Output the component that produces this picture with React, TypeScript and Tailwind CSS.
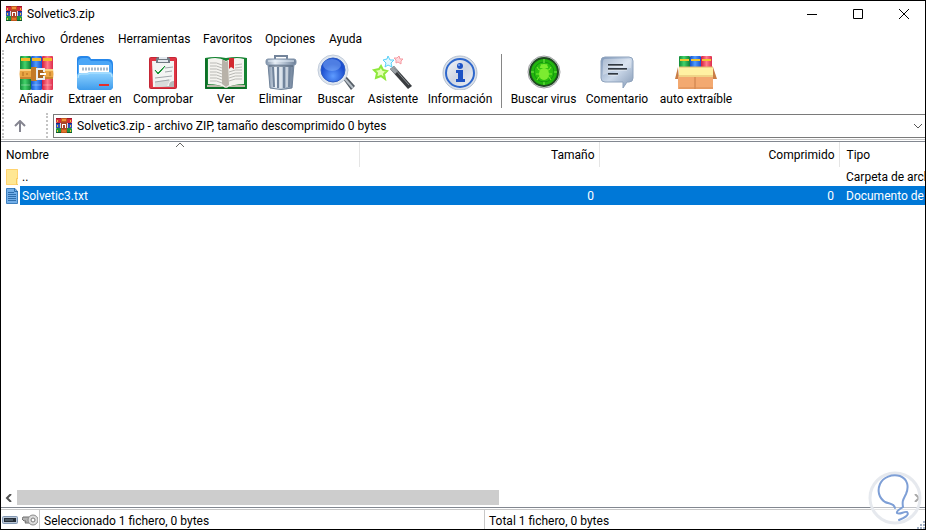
import type { ReactNode } from "react";

type Tool = { label: string; width: string; icon: ReactNode };

const menus = [
  { label: "Archivo", width: "w-[55px]" },
  { label: "Órdenes", width: "w-[58px]" },
  { label: "Herramientas", width: "w-[85px]" },
  { label: "Favoritos", width: "w-[62px]" },
  { label: "Opciones", width: "w-16" },
  { label: "Ayuda", width: "w-12" },
];

// Small stack of books with a belt, used in the title and the address box
function ArchiveIcon() {
  return (
    <svg className="size-4 shrink-0" viewBox="0 0 16 16" aria-hidden="true">
      <rect y="0" width="16" height="5" rx="1" fill="#d42c3c" />
      <rect y="0" width="16" height="1" fill="#a01828" />
      <rect y="5" width="16" height="5" fill="#2f4fb8" />
      <rect y="5" width="16" height="1" fill="#1b2c78" />
      <rect y="10" width="16" height="5" rx="1" fill="#1f9440" />
      <rect y="14" width="16" height="1" fill="#0d5a26" />
      <path d="M1 2h1v2H1zM1 7h1v2H1zM1 12h1v2H1zM14 2h1v2h-1zM14 7h1v2h-1zM14 12h1v2h-1z" fill="#e8c33c" />
      <rect x="5" width="6" height="15" fill="#c2571c" />
      <rect x="6" y="1" width="4" height="2" fill="#f0913c" />
      <path d="M4 10V5h1v5zM11 10V5h1v5z" fill="#d8d4e4" />
      <path d="M5 4h6v7H5z" fill="#a8452c" />
      <path d="M6 10V6h4v4H9V7H7v3z" fill="#fff" />
      <path d="M6 12h4v2H6z" fill="#e0752c" />
    </svg>
  );
}

function Gradients() {
  return (
    <svg className="absolute size-0" aria-hidden="true">
      <defs>
        <linearGradient id="green">
          <stop offset="0" stopColor="#128a38" />
          <stop offset=".45" stopColor="#43d36a" />
          <stop offset="1" stopColor="#0f7d33" />
        </linearGradient>
        <linearGradient id="blue">
          <stop offset="0" stopColor="#1450c8" />
          <stop offset=".45" stopColor="#4f9bff" />
          <stop offset="1" stopColor="#1a50cc" />
        </linearGradient>
        <linearGradient id="red">
          <stop offset="0" stopColor="#d41b3c" />
          <stop offset=".5" stopColor="#ff7c8c" />
          <stop offset="1" stopColor="#dd2c4c" />
        </linearGradient>
        <linearGradient id="folder" x2="0" y2="1">
          <stop offset="0" stopColor="#8fd3ff" />
          <stop offset="1" stopColor="#3f9cec" />
        </linearGradient>
        <linearGradient id="steel">
          <stop offset="0" stopColor="#7d90a8" />
          <stop offset=".3" stopColor="#e6edf5" />
          <stop offset=".6" stopColor="#b4c2d2" />
          <stop offset="1" stopColor="#6a7d96" />
        </linearGradient>
        <radialGradient id="lens" cx=".5" cy=".75">
          <stop offset="0" stopColor="#5f9cff" />
          <stop offset="1" stopColor="#1c4fd0" />
        </radialGradient>
        <linearGradient id="silver" x2="1" y2="1">
          <stop offset="0" stopColor="#f4f6fa" />
          <stop offset=".5" stopColor="#cfd6e2" />
          <stop offset="1" stopColor="#f0f2f6" />
        </linearGradient>
        <radialGradient id="radar">
          <stop offset="0" stopColor="#3cd414" />
          <stop offset="1" stopColor="#1cae0c" />
        </radialGradient>
        <linearGradient id="bubble" x2="1" y2="1">
          <stop offset="0" stopColor="#7f97b8" />
          <stop offset=".5" stopColor="#ccd9ea" />
          <stop offset="1" stopColor="#8499b5" />
        </linearGradient>
      </defs>
    </svg>
  );
}

const tools: Tool[] = [
  {
    label: "Añadir",
    width: "w-[54px]",
    icon: (
      <>
        <rect x="6" y="2" width="11" height="34" rx="1" fill="url(#green)" />
        <rect x="17" y="2" width="11" height="34" rx="1" fill="url(#blue)" />
        <rect x="28" y="2" width="11" height="34" rx="1" fill="url(#red)" />
        <path d="M7 4h9v3H7zM18 4h9v3h-9zM29 4h9v3h-9z" fill="#f3b928" />
        <path d="M7 31h9M18 31h9M29 31h9" stroke="#fff" strokeOpacity=".35" />
        <path d="M6 15q-1 5 0 10h11v-1h11v1h11q1-5 0-10H28v1H17v-1z" fill="#eaa544" />
        <path d="M6 16h11M28 16h11" stroke="#fbd080" strokeWidth="2" />
        <path d="M6 24h11M28 24h11" stroke="#a9601a" />
        <path d="M9 18v4M13 19v2M36 18v4" stroke="#b06a1c" />
        <rect x="17" y="13" width="6" height="14" rx="1" fill="#c47a26" />
        <path d="M30 18v-3h-7v10h7v-3" fill="#a8621c" stroke="#e9edf0" strokeWidth="2" />
        <path d="M26 20h6" stroke="#fff" strokeWidth="2" />
      </>
    ),
  },
  {
    label: "Extraer en",
    width: "w-16",
    icon: (
      <>
        <path d="M4 32V5q0-3 4-3h6q3 0 4 3h17q5 0 5 5v22q0 4-4 4H8q-4 0-4-4z" fill="#2687ea" />
        <path d="M5 9q0-5 5-5h5l3 3h16q4 0 5 4v9H5z" fill="#4ba6f7" />
        <path d="M6 11h30v11H6z" fill="#fff" />
        <path d="M9 15h27" stroke="#a7b9cb" strokeWidth="3" strokeDasharray="2 1" />
        <path d="M4 22q0-3 3-3h6q2 0 3-1h20q4 0 4 4v10q0 4-4 4H8q-4 0-4-4z" fill="url(#folder)" />
        <path d="M5 24q0-4 3-4h7l2-1h19q3 0 3 4" fill="none" stroke="#b6e5ff" />
        <path d="M26 31h10" stroke="#e52e2c" strokeWidth="2" />
      </>
    ),
  },
  {
    label: "Comprobar",
    width: "w-[72px]",
    icon: (
      <>
        <rect x="8" y="3" width="28" height="32" rx="2" fill="#c42635" />
        <rect x="9" y="4" width="26" height="30" rx="1" fill="#e03543" />
        <path d="M11 7h22v20l-5 6H12z" fill="#f3f4f3" />
        <path d="M12 33l16-1q0-5 5-5v6z" fill="#b5b9b8" />
        <path d="M14 28l16-3-4 7-12 1z" fill="#d9dcdb" />
        <path d="M15 9V5q0-2 3-2h8q3 0 3 2v4z" fill="#727b84" />
        <path d="M17 7h10M18 4h8" stroke="#e3e8ee" strokeWidth="2" />
        <path d="M14 16l3 3 7-7-4 5-3 3z" fill="#159333" stroke="#159333" />
        <path d="M24 14l8-1M24 18l7-1M14 24l17-2M14 28l14-2" stroke="#a2a8ac" />
      </>
    ),
  },
  {
    label: "Ver",
    width: "w-[54px]",
    icon: (
      <>
        <path d="M1 4q10-2 21 0 11-2 21 0v31H1z" fill="#148331" />
        <path d="M2 5v29h40" fill="none" stroke="#075a1c" />
        <path d="M4 5q10-3 18 2 8-5 18-2v25q-10 0-18 4-8-4-18-4z" fill="#f4f3ef" />
        <path d="M3 31q12-1 19 3 7-4 19-3v2H3z" fill="#c1b9ab" />
        <path d="M20 6l2 2v25l-4-3V6zM24 6l-2 2v25l3-2z" fill="#b8b2a9" />
        <path d="M6 9q7-1 12 2M6 12q7-1 12 2M6 15q7-1 12 2M6 18q7-1 12 2M6 21q7-1 12 2M6 24q7-1 12 2M6 27q7-1 12 2" fill="none" stroke="#b9b9b5" />
        <path d="M25 18q6-3 13-2M25 21q6-3 13-2M25 24q6-3 13-2M25 27q6-3 13-2M31 11l7-1M31 14l7-1" fill="none" stroke="#b9b9b5" />
        <path d="M25 4h5v11l-3-2-2 2z" fill="#d2292f" />
      </>
    ),
  },
  {
    label: "Eliminar",
    width: "w-[55px]",
    icon: (
      <>
        <path d="M16 5V2h12v3" fill="none" stroke="#73849a" strokeWidth="2" />
        <path d="M9 10h26l-2 24q-11 3-22 0z" fill="url(#steel)" stroke="#70839a" />
        <path d="M14 13l1 20M19 13v21M25 13v21M31 13l-1 20" stroke="#71849c" strokeWidth="2" />
        <path d="M16 13l1 20M22 13v21M28 13v20" stroke="#f2f6fa" />
        <rect x="7" y="5" width="30" height="6" rx="2" fill="url(#steel)" stroke="#8093aa" />
        <path d="M9 7h26" stroke="#e7f1fb" />
        <path d="M10 12h24" stroke="#4e5e72" />
      </>
    ),
  },
  {
    label: "Buscar",
    width: "w-14",
    icon: (
      <>
        <path d="M29 25l3-3 9 10-4 4z" fill="#555d66" />
        <path d="M31 25l8 9" stroke="#b8c0c8" strokeWidth="2" />
        <circle cx="19" cy="16" r="15" fill="#dfe6ef" stroke="#c3cddb" />
        <circle cx="19" cy="16" r="12" fill="url(#lens)" stroke="#2c5cc4" />
        <ellipse cx="18" cy="11" rx="9" ry="6" fill="#9cc6ff" fillOpacity=".4" />
      </>
    ),
  },
  {
    label: "Asistente",
    width: "w-[58px]",
    icon: (
      <>
        <path d="M19 15l4-3 18 20-4 3z" fill="#3a3d40" />
        <path d="M19 15l4-3 4 5-3 3z" fill="#9ba1a6" />
        <path d="M23 14l15 17" stroke="#8a9094" />
        <path d="M10 12l2 4 4 1-3 3 1 5-4-3-5 2 1-5-3-3 5-1z" fill="#e4ffb4" stroke="#8fe83c" strokeWidth="2" />
        <path d="M17 2l2 4h4l-3 3 1 4-4-2-3 2 1-4-3-3 4-1z" fill="#e4f9ff" stroke="#5ad0f8" />
        <path d="M28 2l1 3h3l-2 2v3l-3-2-2 1v-3l-2-2h3z" fill="#ffd8dc" stroke="#f59aa2" />
      </>
    ),
  },
  {
    label: "Información",
    width: "w-[76px]",
    icon: (
      <>
        <circle cx="22" cy="19" r="17" fill="#d9e0ea" stroke="#b5c0cf" />
        <circle cx="22" cy="19" r="14" fill="url(#silver)" stroke="#2e67cc" strokeWidth="2" />
        <circle cx="22" cy="12" r="3" fill="#1c52c4" />
        <path d="M18 16h7v9h2v3h-9v-3h2v-6h-2z" fill="#1c52c4" />
        <circle cx="21" cy="11" r="1" fill="#83aef4" />
      </>
    ),
  },
  {
    label: "Buscar virus",
    width: "w-[75px]",
    icon: (
      <>
        <circle cx="22" cy="18" r="16" fill="#e8e8ec" stroke="#9c9ca0" />
        <circle cx="22" cy="18" r="14" fill="url(#radar)" stroke="#1f4a20" strokeWidth="2" />
        <circle cx="22" cy="18" r="10" fill="none" stroke="#169410" />
        <path d="M22 5v4M22 28v3M9 18h3M32 18h3" stroke="#7cec4a" />
        <path d="M15 13l2 3h3M29 13l-2 3h-3M14 20h5M30 20h-5M15 26l2-3 3-1M29 26l-2-3-3-1M19 10l1 3M25 10l-1 3" fill="none" stroke="#7cec30" />
        <ellipse cx="22" cy="20" rx="5" ry="6" fill="#7cec30" />
        <path d="M18 14q0-4 4-4t4 4z" fill="#7cec30" />
      </>
    ),
  },
  {
    label: "Comentario",
    width: "w-[72px]",
    icon: (
      <>
        <path d="M10 3h24q4 0 4 4v17q0 4-4 4h-2l-4 6v-6H10q-4 0-4-4V7q0-4 4-4z" fill="url(#bubble)" stroke="#8fa3bd" />
        <path d="M10 5h23q3 0 3 3v6q-14 0-28 7V8q0-3 2-3z" fill="#fff" fillOpacity=".3" />
        <path d="M13 11h15M13 15h19M13 20h10" stroke="#303842" strokeWidth="2" />
        <path d="M13 12h15M13 16h19M13 21h10" stroke="#fff" strokeOpacity=".6" />
      </>
    ),
  },
  {
    label: "auto extraíble",
    width: "w-[86px]",
    icon: (
      <>
        <rect x="5" y="2" width="11" height="14" rx="1" fill="url(#green)" />
        <rect x="16" y="2" width="11" height="14" rx="1" fill="url(#blue)" />
        <rect x="27" y="2" width="11" height="14" rx="1" fill="url(#red)" />
        <path d="M6 6h9M17 6h9M28 6h9" stroke="#f5c52c" strokeWidth="2" />
        <path d="M4 13L1 25h4zM39 13l4 12h-4z" fill="#c97d45" />
        <path d="M4 22h35v13H4z" fill="#f3a970" />
        <path d="M21 23v12" stroke="#c87c46" />
        <path d="M5 34h34" stroke="#d98c54" />
        <path d="M5 13h34v10H5z" fill="#fff1a2" />
        <path d="M5 13h34M5 22h34" stroke="#e1b66c" />
      </>
    ),
  },
];

function ToolButton({ tool }: { tool: Tool }) {
  return (
    <button className={`flex shrink-0 flex-col items-center whitespace-nowrap ${tool.width}`}>
      <svg className="h-9 w-11" viewBox="0 0 44 36" aria-hidden="true">
        {tool.icon}
      </svg>
      <span className="leading-[18px]">{tool.label}</span>
    </button>
  );
}

function Gripper() {
  return <div className="w-0.5 shrink-0 self-stretch border-l-2 border-dotted border-[#c4c4c4]" />;
}

export default function App() {
  return (
    <div className="relative flex h-screen flex-col overflow-hidden border border-black bg-white font-[Roboto,'Open_Sans',sans-serif] text-[12px] leading-4 text-black">
      <Gradients />

      {/* Title bar */}
      <header className="flex h-[25px] shrink-0 items-center pl-[5px]">
        <ArchiveIcon />
        <h1 className="ml-[5px] flex-1">Solvetic3.zip</h1>
        <div className="flex gap-[34px] pr-[15px]">
          <button aria-label="Minimizar">
            <svg className="size-3" viewBox="0 0 12 12" stroke="#000">
              <path d="M1 6.5h10" />
            </svg>
          </button>
          <button aria-label="Maximizar">
            <svg className="size-3" viewBox="0 0 12 12" fill="none" stroke="#000">
              <path d="M1.500 1.500h9v9h-9z" />
            </svg>
          </button>
          <button aria-label="Cerrar">
            <svg className="size-3" viewBox="0 0 12 12" stroke="#000">
              <path d="M1 1l10 10M11 1L1 11" />
            </svg>
          </button>
        </div>
      </header>

      <nav className="flex h-6 shrink-0 items-center pt-px pl-1">
        {menus.map((menu) => (
          <button key={menu.label} className={`text-left whitespace-nowrap ${menu.width}`}>
            {menu.label}
          </button>
        ))}
      </nav>

      {/* Toolbar and address box */}
      <div className="flex shrink-0 border-b border-[#c8c8c8] pb-px pl-px">
        <Gripper />
        <div className="min-w-0 flex-1">
          <div className="flex h-[63px] items-start pt-1 pl-[5px]">
            {tools.slice(0, 8).map((tool) => (
              <ToolButton key={tool.label} tool={tool} />
            ))}
            <div className="mr-1 ml-[3px] h-[54px] w-px shrink-0 bg-[#868686]" />
            {tools.slice(8).map((tool) => (
              <ToolButton key={tool.label} tool={tool} />
            ))}
          </div>
          <div className="flex h-[25px] items-end">
            <button aria-label="Subir un nivel" className="flex h-6 w-[42px] items-center justify-center pr-2.5">
              <svg className="size-3" viewBox="0 0 12 12" fill="none" stroke="#858590" strokeWidth="2">
                <path d="M6 12V2M1 6l5-5 5 5" />
              </svg>
            </button>
            <Gripper />
            <label className="ml-[5px] flex h-6 flex-1 items-center border border-r-0 border-[#7a7a7a] pr-[3px] pl-0.5">
              <ArchiveIcon />
              <select aria-label="Ruta" className="ml-[5px] flex-1 appearance-none bg-white outline-none">
                <option>Solvetic3.zip - archivo ZIP, tamaño descomprimido 0 bytes</option>
              </select>
              <svg className="size-2" viewBox="0 0 8 8" fill="none" stroke="#555">
                <path d="M0 2l4 4 4-4" />
              </svg>
            </label>
          </div>
        </div>
      </div>

      {/* File list */}
      <main className="mt-px flex min-h-0 flex-1 flex-col border-t border-[#828790]">
        <div className="min-h-0 flex-1 overflow-hidden">
          <table className="w-[1080px] table-fixed border-collapse">
            <colgroup>
              <col className="w-[358px]" />
              <col className="w-60" />
              <col className="w-60" />
              <col />
            </colgroup>
            <thead>
              <tr className="h-[25px]">
                <th className="relative border-r border-[#e5e5e5] pl-[5px] text-left font-normal">
                  Nombre
                  <svg className="absolute inset-x-0 top-0 mx-auto h-1.5 w-2" viewBox="0 0 8 6" fill="none" stroke="#666">
                    <path d="M0 5l4-4 4 4" />
                  </svg>
                </th>
                <th className="border-r border-[#e5e5e5] pr-1 text-right font-normal">Tamaño</th>
                <th className="border-r border-[#e5e5e5] pr-1 text-right font-normal">Comprimido</th>
                <th className="pl-[7px] text-left font-normal">Tipo</th>
              </tr>
            </thead>
            <tbody>
              <tr className="h-[19px]">
                <td>
                  <div className="flex items-center gap-1 pl-[5px]">
                    <svg className="h-4 w-3" viewBox="0 0 12 16" aria-hidden="true">
                      <path d="M0 0h12v16H0z" fill="#ffe793" />
                      <path d="M.5.5h11v15H.5z" fill="none" stroke="#ffd36f" />
                      <path d="M10.500 9.500h2v6h-2z" fill="#fff0b8" stroke="#f9c95c" />
                    </svg>
                    ..
                  </div>
                </td>
                <td />
                <td />
                <td className="pl-[7px]">Carpeta de archivos</td>
              </tr>
              <tr className="h-[19px] bg-[#0078d7] text-white">
                <td>
                  <div className="flex items-center">
                    <span className="flex h-[19px] w-[19px] items-center bg-white pl-[5px]">
                      <svg className="h-4 w-3" viewBox="0 0 12 16" fill="none" aria-hidden="true">
                        <path d="M.5.5H9l2.500 3v12H.5z" fill="#72aee8" stroke="#3d7fbe" />
                        <path d="M2 4.500h6M2 6.500h8M2 8.500h8M2 10.500h8M2 12.500h8" stroke="#2f6fae" />
                        <path d="M8.500 0v3.500H12" stroke="#2d6fae" />
                      </svg>
                    </span>
                    <span className="pl-0.5">Solvetic3.txt</span>
                  </div>
                </td>
                <td className="pr-[5px] text-right">0</td>
                <td className="pr-[5px] text-right">0</td>
                <td className="pl-[7px]">Documento de texto</td>
              </tr>
            </tbody>
          </table>
        </div>
        <div className="flex h-[17px] shrink-0 items-start">
          <button aria-label="Desplazar a la izquierda" className="flex h-4 w-4 items-center justify-center">
            <svg className="size-2" viewBox="0 0 8 8" fill="none" stroke="#505050" strokeWidth="2">
              <path d="M6 0L2 4l4 4" />
            </svg>
          </button>
          <div className="flex-1">
            <div className="h-[15px] w-[54%] bg-[#cdcdcd]" />
          </div>
          <button aria-label="Desplazar a la derecha" className="flex h-4 w-4 items-center justify-center">
            <svg className="size-2" viewBox="0 0 8 8" fill="none" stroke="#505050" strokeWidth="2">
              <path d="M2 0l4 4-4 4" />
            </svg>
          </button>
        </div>
      </main>

      {/* Status bar */}
      <footer className="flex h-[22px] shrink-0 items-stretch border-t border-[#828790] pt-px">
        <div className="flex w-[39px] items-center gap-1 border-t border-r border-[#c8c8c8] pl-px">
          <svg className="h-3 w-4" viewBox="0 0 16 12" aria-hidden="true">
            <rect x=".5" y="2.500" width="15" height="7" rx="1" fill="#b9c6d6" stroke="#8297b2" />
            <path d="M2 4h12v4H2z" fill="#252d36" />
            <path d="M3 6h8" stroke="#718392" />
          </svg>
          <svg className="h-3 w-4" viewBox="0 0 16 12" fill="none" aria-hidden="true">
            <path d="M7 3H1L0 5l2 2h2l-1 2h5" fill="#b3b3b3" stroke="#707070" />
            <circle cx="11" cy="6" r="5" fill="#ddd" stroke="#8b8b8b" />
            <circle cx="11" cy="6" r="2" fill="#fff" stroke="#777" />
          </svg>
        </div>
        <p className="flex flex-1 items-center border-t border-r border-[#c8c8c8] pt-[3px] pl-1">
          Seleccionado 1 fichero, 0 bytes
        </p>
        <div className="flex flex-1 border-t border-[#c8c8c8]">
          <p className="flex flex-1 items-center pt-[3px] pl-1">Total 1 fichero, 0 bytes</p>
          <svg className="size-2 shrink-0 self-end" viewBox="0 0 8 8" fill="#a5b3c7" aria-hidden="true">
            <path d="M6 0h2v2H6zM3 3h2v2H3zM6 3h2v2H6zM0 6h2v2H0zM3 6h2v2H3zM6 6h2v2H6z" />
          </svg>
        </div>
      </footer>

      {/* Light bulb stamp over the corner */}
      <svg className="pointer-events-none absolute right-0.5 bottom-[3px] size-14" viewBox="0 0 56 56" fill="none" aria-hidden="true">
        <circle cx="28" cy="28" r="25" fill="#fff" fillOpacity=".5" stroke="#e6e9ee" strokeWidth="3" />
        <path
          d="M28 38C27 33 22 34 18 32C12 28 10 21 13 14C16 7 25 4 33 6C41 9 42 17 39 24C36 30 35 31 36 37C33 39 29 41 30 43C33 45 37 41 40 42C43 45 37 48 32 50"
          stroke="#7e9fd6"
          strokeWidth="2"
          strokeLinecap="round"
        />
      </svg>
    </div>
  );
}
